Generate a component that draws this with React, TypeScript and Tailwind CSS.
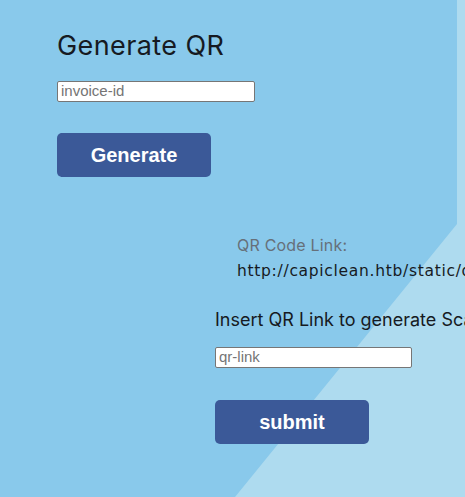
export default function App() {
  return (
    <div className="relative w-[465px] h-[497px] overflow-hidden bg-[#89c9eb]">
      {/* lighter diagonal band in the background */}
      <svg className="absolute inset-0" width="465" height="497" viewBox="0 0 465 497">
        <polygon points="457,0 465,0 465,497 235,497 457,224" fill="#aedbef" />
      </svg>

      <div className="relative pl-[57px] pt-[28px] font-['Inter',sans-serif] text-[#161a22]">
        <h2 className="text-[27px] leading-[36px] font-normal tracking-[0.4px] whitespace-nowrap">Generate QR</h2>
        <input
          type="text"
          placeholder="invoice-id"
          className="mt-[17px] block w-[198px] h-[21px] px-[3px] bg-white border border-[#767676] rounded-[2px] text-[15px] font-['Liberation_Sans',sans-serif] placeholder:text-[#757575] outline-none"
        />
        <button className="mt-[31px] block w-[154px] h-[44px] rounded-[5px] bg-[#3b5998] text-white text-[20px] font-bold font-['Liberation_Sans',sans-serif]">
          Generate
        </button>

        <div className="ml-[180px] mt-[55px] text-[16px] leading-[26px] whitespace-nowrap">
          <p className="text-[#66707a] tracking-[0.2px]">QR Code Link:</p>
          <p className="text-[#161a22] font-['DejaVu_Sans',sans-serif] text-[15.5px] tracking-[0.7px]">
            http://capiclean.htb/static/qr_code/qr_code.png
          </p>
        </div>

        <div className="ml-[158px] mt-[23px]">
          <p className="text-[18px] leading-[26px] whitespace-nowrap">Insert QR Link to generate Scannable Invoice</p>
          <input
            type="text"
            placeholder="qr-link"
            className="mt-[14px] block w-[197px] h-[21px] px-[3px] bg-white border border-[#767676] rounded-[2px] text-[15px] font-['Liberation_Sans',sans-serif] placeholder:text-[#757575] outline-none"
          />
          <button className="mt-[32px] block w-[154px] h-[44px] rounded-[5px] bg-[#3b5998] text-white text-[20px] font-bold font-['Liberation_Sans',sans-serif]">
            submit
          </button>
        </div>
      </div>
    </div>
  );
}
